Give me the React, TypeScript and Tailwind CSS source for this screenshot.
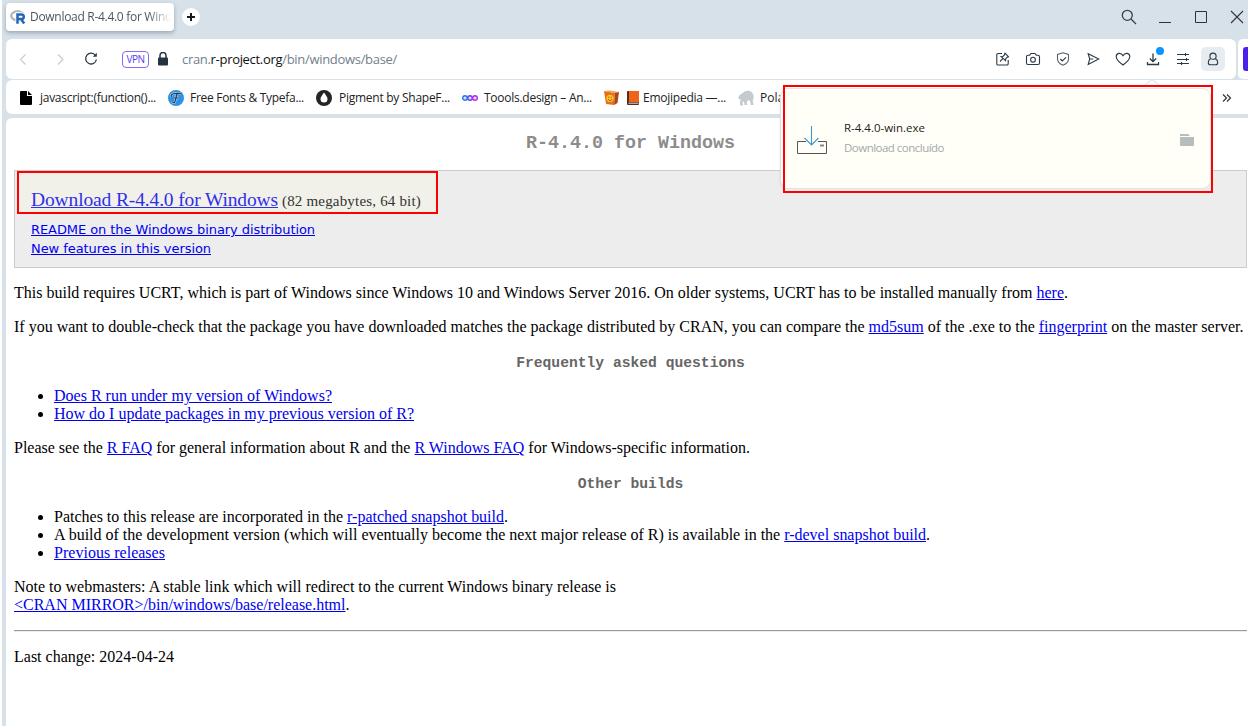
import React from "react";

const ui = "font-['Open_Sans','Noto_Sans',sans-serif]";

/* A run of text whose tracking is adjusted so that it fills an exact width. */
function T({ w, children, className = "" }: { w: number; children: React.ReactNode; className?: string }) {
  const ref = React.useRef<HTMLSpanElement>(null);
  React.useLayoutEffect(() => {
    const el = ref.current;
    if (!el) return;
    el.style.letterSpacing = "0px";
    const n = (el.textContent || "").length;
    el.style.letterSpacing = (w - el.getBoundingClientRect().width) / n + "px";
  }, [w]);
  return <span ref={ref} className={"inline-block whitespace-nowrap " + className}>{children}</span>;
}

function A({ children, className = "text-[#0000ee]" }: { children: React.ReactNode; className?: string }) {
  return <a className={"underline " + className}>{children}</a>;
}

function Ic({ children, className = "" }: { children: React.ReactNode; className?: string }) {
  return (
    <svg width="16" height="16" viewBox="0 0 16 16" fill="none" stroke="#2b3a46" strokeWidth="1.1" className={"shrink-0 " + className}>
      {children}
    </svg>
  );
}

function TabBar() {
  return (
    <div className="flex h-[39px] shrink-0 items-start">
      <div className="ml-[6px] mt-[3px] flex h-[28px] w-[168px] items-center rounded-[4px] bg-white pl-[4px] shadow-[0_2px_4px_rgba(60,80,100,0.4)]">
        <svg width="16" height="14" viewBox="0 0 16 14" className="shrink-0">
          <ellipse cx="7.6" cy="5.8" rx="6.4" ry="4.5" fill="none" stroke="#b4b7bb" strokeWidth="2.4" />
          <path d="M7.500 14V4.200h4a2.300 2.300 0 0 1 .5 4.600L14.800 13.500M7.500 8.800h4" fill="none" stroke="#fff" strokeWidth="4" />
          <path d="M7.500 13.700V4.500h4a2.200 2.200 0 0 1 0 4.500H7.500M11 9l3.200 4.500" fill="none" stroke="#2266b8" strokeWidth="2.500" />
        </svg>
        <div className={"ml-[4px] w-[142px] text-[12px] leading-[18px] text-[#4f5459] [mask-image:linear-gradient(to_right,#000_118px,transparent_141px)] " + ui}>
          <T w={142}>Download R-4.4.0 for Wind</T>
        </div>
      </div>
      <div className="ml-[8px] mt-[8px] flex h-[18px] w-[18px] items-center justify-center rounded-full bg-white">
        <svg width="8" height="8" viewBox="0 0 8 8" stroke="#111b24" strokeWidth="2"><path d="M4 0v8M0 4h8" /></svg>
      </div>
      <div className="mr-[3px] mt-[9px] flex grow items-center justify-end gap-[20px]">
        <Ic><g stroke="#3c4043" strokeWidth="1.300"><circle cx="6.300" cy="6.300" r="5" /><path d="M10 10l5 5" /></g></Ic>
        <Ic><path d="M2 13.500h12" stroke="#333" strokeWidth="1" /></Ic>
        <Ic><path d="M2.500 2.500h11v11h-11z" stroke="#333" strokeWidth="1" /></Ic>
        <Ic><path d="M2 2l12 12M14 2L2 14" stroke="#333" /></Ic>
      </div>
    </div>
  );
}

function AddressBar() {
  return (
    <div className="flex h-[40px] shrink-0">
      <div className="ml-[6px] flex w-[1230px] shrink-0 items-center rounded-[6px] bg-white">
        <svg width="60" height="16" viewBox="0 0 60 16" fill="none" stroke="#c5cacf" strokeWidth="1.1" className="ml-[6px] shrink-0">
          <path d="M13.500 3.500L8.500 8.500l5 5M46 3.500l5 5-5 5" />
        </svg>
        <Ic className="ml-[11px]"><path d="M12.500 4.500A5.400 5.400 0 1 0 13.400 8.500" strokeWidth="1.300" /><path d="M9.800 5.800h4V1.800z" fill="#2b3a46" stroke="none" /></Ic>
        <div className={"ml-[23px] flex h-[17px] w-[27px] items-center justify-center rounded-[4px] border-[1.500px] border-[#8a6cf0] text-[10px] leading-none text-[#5a3ff0] " + ui}><T w={18}>VPN</T></div>
        <svg width="12" height="14" viewBox="0 0 12 14" className="ml-[8px] shrink-0">
          <path d="M3 6V3.500a3 3 0 0 1 6 0V6" fill="none" stroke="#27333d" strokeWidth="1.500" /><rect x="1" y="5.500" width="10" height="8" rx="1" fill="#27333d" />
        </svg>
        <div className={"ml-[13px] whitespace-nowrap text-[13px] leading-[20px] text-[#72808c] " + ui}>
          <T w={215}>cran.<span className="text-[#111]">r-project.org</span>/bin/windows/base/</T>
        </div>
        <div className="ml-auto mr-[15px] flex items-center gap-[14px]">
          <Ic><path d="M7 2.500H3A1.200 1.200 0 0 0 1.800 3.700v9A1.200 1.200 0 0 0 3 14h9a1.200 1.200 0 0 0 1.200-1.200V9" /><path d="M5 10.500l2.800-2.800M10 2.200L13.500 5.800l-1.700.7-1 1.200-.3 2L6 5.500l2.200-.3L9.400 4z" /></Ic>
          <Ic><path d="M1.500 5.700A1.500 1.500 0 0 1 3 4.200h1.700l1.300-1.700h4l1.300 1.700H13a1.500 1.500 0 0 1 1.500 1.500v6.300A1.500 1.500 0 0 1 13 13.500H3A1.500 1.500 0 0 1 1.500 12z" /><circle cx="8" cy="8.700" r="2.400" /></Ic>
          <Ic><path d="M8 1.800L13.500 3.500V8c0 3-2.500 5-5.500 6.200C5 13 2.500 11 2.500 8V3.500z" stroke="#56626c" /><path d="M5.300 8l2 2L11 6.300" /></Ic>
          <Ic><path d="M3.200 2.700L13.700 8 3.200 13.500 4.700 8zM4.700 8h3.500" /></Ic>
          <Ic><path d="M8 14C4 11 1.200 8.700 1.200 5.700 1.200 2 5.800 1 8 4.600 10.200 1 14.800 2 14.800 5.700c0 3-2.800 5.300-6.800 8.300z" /></Ic>
          <div className="relative">
            <Ic><path d="M8 2.500v8M4.800 7.500L8 10.700l3.200-3.200M2.500 11v2.500h11V11" strokeWidth="1.300" /></Ic>
            <span className="absolute -top-[4px] left-[11px] h-[8px] w-[8px] rounded-full bg-[#0a95ff]" />
          </div>
          <Ic><path d="M2 3.500h12M2 8.500h12M2 12.500h12M10.500 2v3M11.500 7v3M6.500 11v3" /></Ic>
          <div className="-mx-[4px] flex h-[24px] w-[24px] items-center justify-center rounded-[5px] bg-[#e7ecf0]">
            <Ic><circle cx="8" cy="5.200" r="3.100" /><path d="M5.700 7.500C3.800 8.500 3.300 10 3.300 11.500c0 1.500.7 2.300 2 2.300h5.400c1.300 0 2-.8 2-2.300 0-1.500-.5-3-2.400-4" /></Ic>
          </div>
        </div>
      </div>
      <div className="ml-[2px] flex grow items-center overflow-hidden rounded-l-[5px] bg-white"><div className="ml-[5px] h-[24px] w-[10px] shrink-0 rounded-l-[3px] bg-[#4b20ee]" /></div>
    </div>
  );
}

function Bookmarks() {
  return (
    <div className={"ml-[6px] mt-px flex h-[34px] shrink-0 items-center whitespace-nowrap rounded-l-[6px] bg-white pl-[14px] pt-px text-[12px] leading-[18px] text-[#222] " + ui}>
      <svg width="12" height="14" viewBox="0 0 12 14"><path d="M0 1a1 1 0 0 1 1-1h6v5h5v8a1 1 0 0 1-1 1H1a1 1 0 0 1-1-1zM8 0l4 4H8z" /></svg>
      <T w={116} className="ml-[8px]">javascript:(function()...</T>
      <svg width="16" height="16" viewBox="0 0 16 16" className="ml-[12px]"><circle cx="8" cy="8" r="8" fill="#2794e9" /><path d="M3.500 7C2 3.500 7 3 13 3.700M9 4L7 11.500c-.5 1.500-2.500 1.500-2.500 0M6 8h5" fill="none" stroke="#b9d9f2" strokeWidth="2.400" /><path d="M3.500 7C2 3.500 7 3 13 3.700M9 4L7 11.500c-.5 1.500-2.500 1.500-2.500 0M6 8h5" fill="none" stroke="#2c3d50" strokeWidth="1.200" /></svg>
      <T w={114} className="ml-[6px]">Free Fonts &amp; Typefa...</T>
      <svg width="16" height="16" viewBox="0 0 16 16" className="ml-[12px]"><circle cx="8" cy="8" r="8" fill="#252525" /><path d="M8 2.500c2 3 3.500 4.500 3.500 6.500a3.500 3.500 0 0 1-7 0C4.500 7 6 5.500 8 2.500z" fill="#fff" /></svg>
      <T w={111} className="ml-[7px]">Pigment by ShapeF...</T>
      <svg width="16" height="16" viewBox="0 0 16 16" strokeWidth="1.400" className="ml-[12px]"><circle cx="3" cy="8" r="2.300" stroke="#2378f7" fill="#d2e4ff" /><circle cx="8" cy="8" r="2.300" stroke="#6544ee" fill="#ddd6ff" /><circle cx="13" cy="8" r="2.300" stroke="#b02df2" fill="#f3d9ff" /></svg>
      <T w={108} className="ml-[6px]">Toools.design – An...</T>
      <svg width="15" height="16" viewBox="0 0 15 16" className="ml-[12px]"><path d="M0 1l11 2-1 12-8-1z" fill="#e86f18" /><path d="M0 1l6-.5L15 2l-4 1.200z" fill="#f3a35e" /><path d="M11 3l4-1-1.500 11-3.500 2z" fill="#a8481a" /><circle cx="6" cy="8.300" r="3.600" fill="#ffc52e" /><path d="M4 9c1 2 3 2 4 0" fill="none" stroke="#8a3a08" strokeWidth=".9" /><path d="M4.300 7.200h1M6.700 7.200h1" stroke="#8a3a08" /></svg>
      <svg width="12" height="14" viewBox="0 0 12 14" className="ml-[8px]"><rect width="12" height="14" rx="1" fill="#5b2a1c" /><path d="M2 0h10v11H2z" fill="#f16317" /><path d="M1.500 12.200h10" stroke="#ddd" /></svg>
      <T w={83} className="ml-[4px]">Emojipedia —...</T>
      <svg width="16" height="16" viewBox="0 0 16 16" className="ml-[12px]"><path d="M.3 8C1 5 3 4 4 3.500L6.500 1.500C9 .5 12 .5 13.500 2c1.700 1.500 2.200 3.500 2.200 5.500l-.9 3 .8 4.500h-2.800l-.8-4-1.500-1-1.800 2 .5 3H6.500L6 11.500l-1.500.5L5 15.500H2.200l-.4-3.500L3 9.500 1 9.300z" fill="#c5cad1" /></svg>
      <span className="ml-[6px]">Pola</span>
      <svg width="10" height="8" viewBox="0 0 10 8" fill="none" stroke="#30363b" strokeWidth="1.200" className="ml-auto mr-[16px]"><path d="M1 .5L4.500 4 1 7.500M5 .5L8.500 4 5 7.500" /></svg>
    </div>
  );
}

function Popup() {
  return (
    <>
      <div className="absolute left-[778px] top-[88px] z-10 h-[101px] w-[430px] rounded-[9px] border border-[#d7e1e9] bg-white shadow-[0_1px_2px_rgba(60,80,100,0.15)]" />
      <div className="absolute left-[781px] top-[85px] z-20 flex h-[108px] w-[430px] border-2 border-[#f00] bg-[linear-gradient(#fff_81px,#ededed_81px)]">
        <div className="mt-px flex h-[101px] w-[426px] rounded-br-[9px] rounded-tr-[9px] border-y border-r border-[#dfe6e4] bg-[#fffff7] pl-[12px]">
          <svg width="32" height="32" viewBox="0 0 32 32" fill="none" className="mt-[37px] shrink-0"><path d="M9 15.500H.500v12h29v-12H21" stroke="#555" /><path d="M14.500 0v19M7.500 12l7 7 7-7" stroke="#3b97d3" strokeWidth="1.100" /><path d="M23 19.500h4" stroke="#888" strokeWidth="2" /></svg>
          <div className={"ml-[15px] mt-[30px] flex flex-col items-start text-[11.500px] leading-[18px] " + ui}>
            <T w={81} className="text-[#222]">R-4.4.0-win.exe</T>
            <T w={100} className="mt-[2px] text-[#a3a9ac]">Download concluído</T>
          </div>
          <svg width="14" height="12" viewBox="0 0 14 12" fill="#b7bcbc" className="ml-auto mr-[16px] mt-[45px]"><path d="M0 0h8l2 2H0zM0 3h14v8a1 1 0 0 1-1 1H1a1 1 0 0 1-1-1z" /></svg>
        </div>
      </div>
      <svg width="16" height="6" viewBox="0 0 16 6" fill="none" stroke="#d2dde6" className="absolute left-[1142px] top-[79px] z-10"><path d="M1 6L6.500 1.500a2 2 0 0 1 3 0L15 6" fill="#fff" /></svg>
    </>
  );
}

const mono = "text-center font-['Liberation_Mono',monospace] font-bold";

export default function App() {
  return (
    <div className="relative flex h-[726px] w-[1248px] flex-col overflow-hidden border-l-2 border-white bg-[#d7e1e9]">
      <div className="-ml-[2px] flex shrink-0 flex-col">
        <TabBar />
        <AddressBar />
        <Bookmarks />
      </div>
      <div className="ml-[4px] mt-[4px] grow rounded-tl-[6px] bg-white pl-[8px] pr-px font-['Liberation_Serif',serif] text-[16px] leading-[18px] text-black">
        <h1 className={mono + " pt-[15px] text-[18.330px] leading-[22px] text-[#8c8c8c]"}>R-4.4.0 for Windows</h1>
        <section className="mt-[15px] h-[98px] border border-[#ccc] bg-[#ededed] pl-[2px]">
          <div className="flex h-[43px] w-[421px] items-end border-2 border-[#f00] bg-[#f1f1e9] pl-[12px]">
            <span className="whitespace-nowrap leading-[22px]"><T w={247} className="text-[19.500px]"><A className="text-[#2f2fe8]">Download R-4.4.0 for Windows</A></T><T w={139} className="ml-[4px] text-[15px] text-[#333]">(82 megabytes, 64 bit)</T></span>
          </div>
          <div className="mt-[6px] pl-[14px] font-['DejaVu_Sans',sans-serif] text-[13px] leading-[19px]">
            <div><T w={284}><A>README on the Windows binary distribution</A></T></div>
            <div><T w={180}><A>New features in this version</A></T></div>
          </div>
        </section>
        <p className="mt-[16px]"><T w={1054}>This build requires UCRT, which is part of Windows since Windows 10 and Windows Server 2016. On older systems, UCRT has to be installed manually from <A>here</A>.</T></p>
        <p className="mt-[16px]"><T w={1229.5}>If you want to double-check that the package you have downloaded matches the package distributed by CRAN, you can compare the <A>md5sum</A> of the .exe to the <A>fingerprint</A> on the master server.</T></p>
        <h2 className={mono + " mt-[18px] text-[14.660px] text-[#666]"}>Frequently asked questions</h2>
        <ul className="mt-[15px] list-disc pl-[40px]">
          <li><T w={278}><A>Does R run under my version of Windows?</A></T></li>
          <li><T w={360}><A>How do I update packages in my previous version of R?</A></T></li>
        </ul>
        <p className="mt-[16px]"><T w={736}>Please see the <A>R FAQ</A> for general information about R and the <A>R Windows FAQ</A> for Windows-specific information.</T></p>
        <h2 className={mono + " mt-[18px] text-[14.660px] text-[#666]"}>Other builds</h2>
        <ul className="mt-[15px] list-disc pl-[40px]">
          <li><T w={454}>Patches to this release are incorporated in the <A>r-patched snapshot build</A>.</T></li>
          <li><T w={876}>A build of the development version (which will eventually become the next major release of R) is available in the <A>r-devel snapshot build</A>.</T></li>
          <li><T w={111}><A>Previous releases</A></T></li>
        </ul>
        <p className="mt-[16px]"><T w={602}>Note to webmasters: A stable link which will redirect to the current Windows binary release is</T><br /><T w={335.5}><A>&lt;CRAN MIRROR&gt;/bin/windows/base/release.html</A>.</T></p>
        <hr className="mt-[16px] h-[2px] border-b border-t border-b-[#eee] border-t-[#999]" />
        <p className="mt-[16px]"><T w={160}>Last change: 2024-04-24</T></p>
      </div>
      <Popup />
    </div>
  );
}
